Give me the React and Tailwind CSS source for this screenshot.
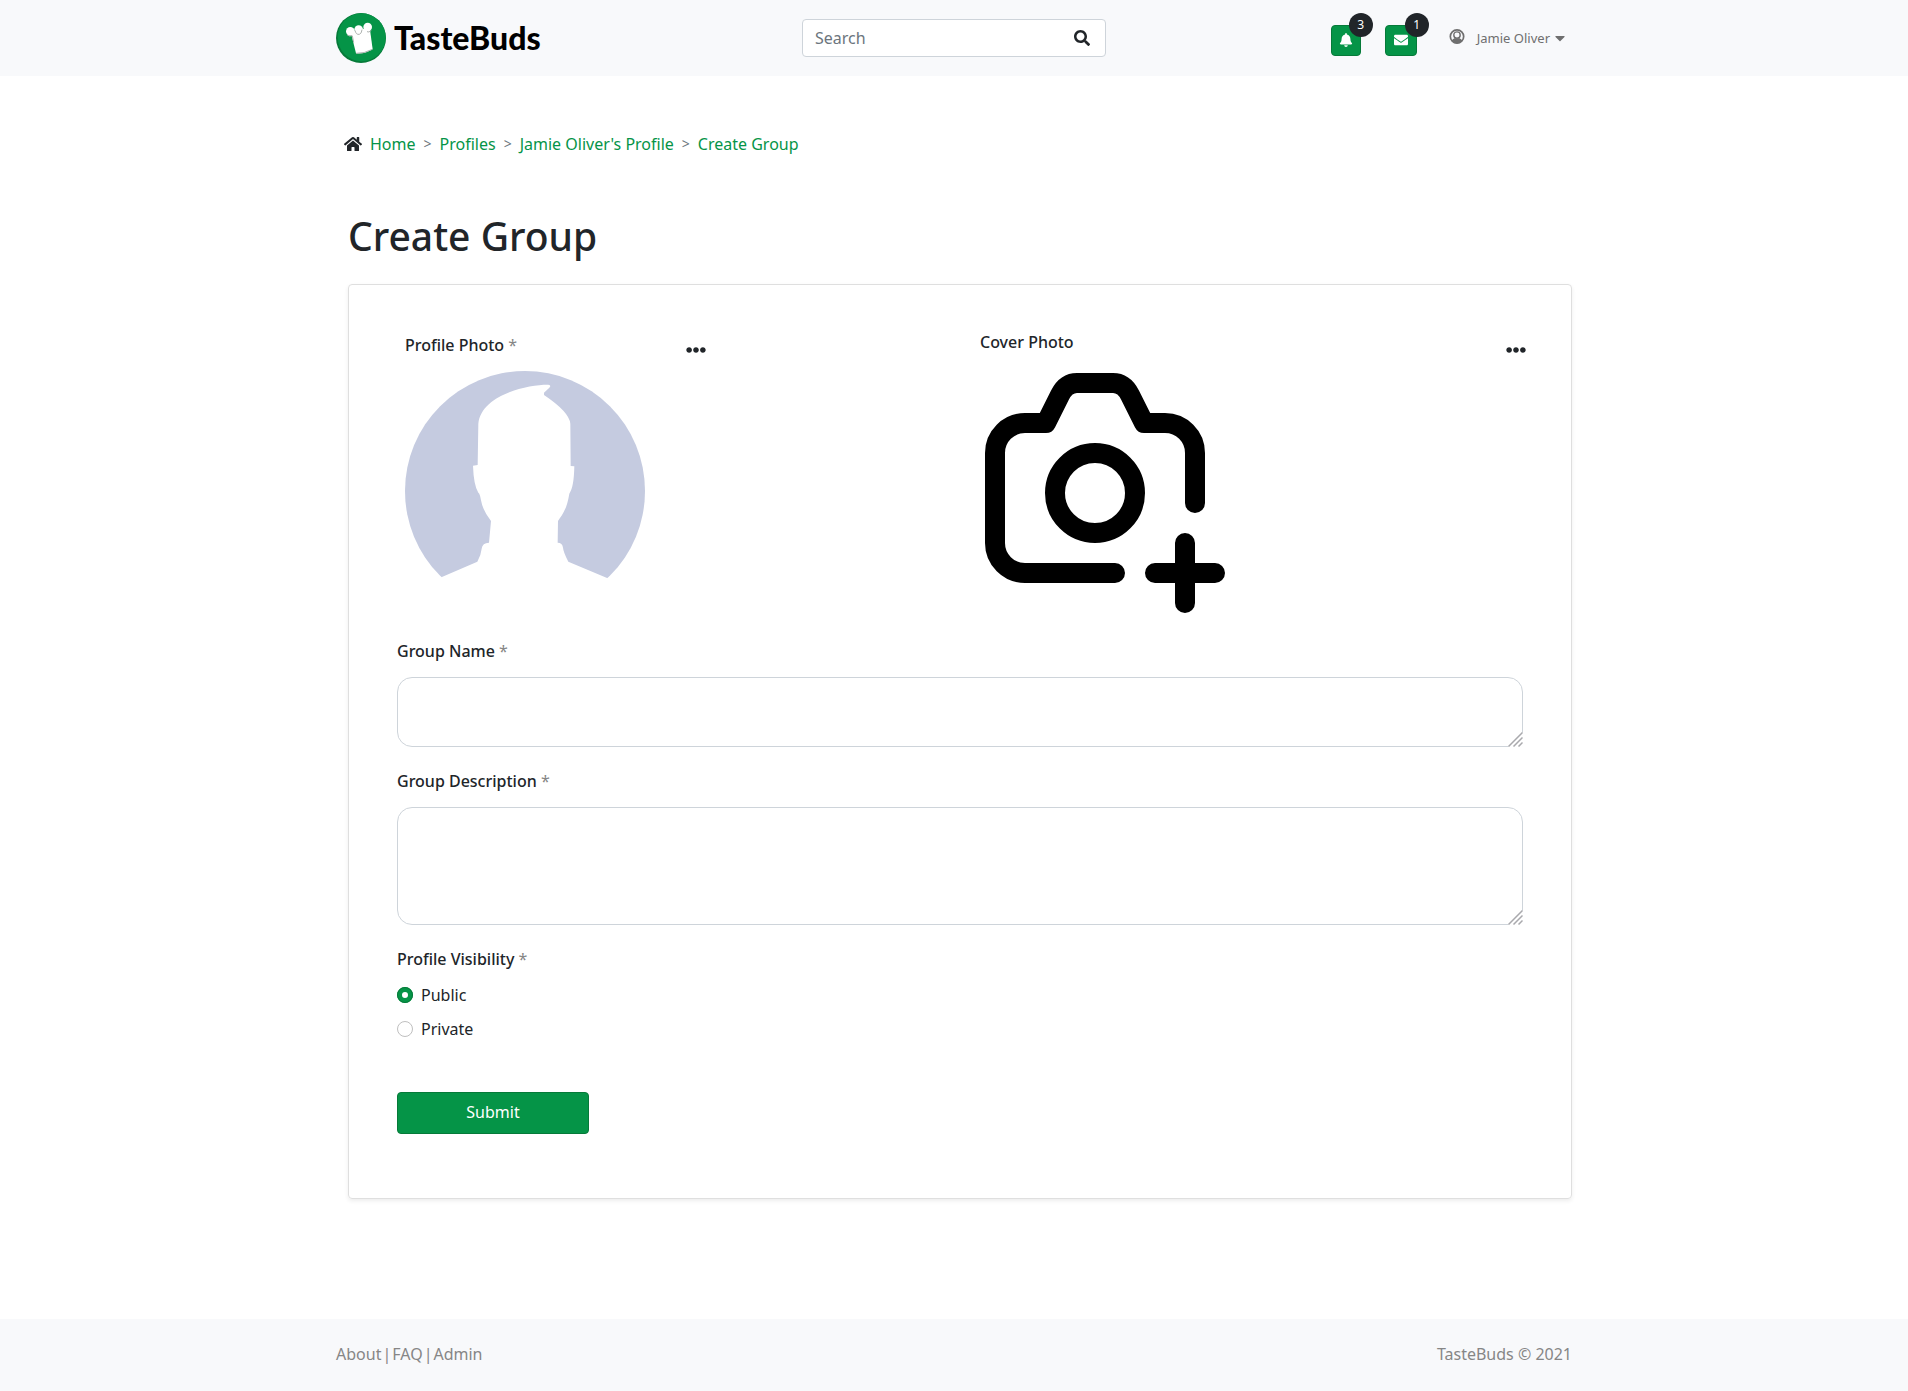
import React from "react";
import { FaSearch, FaBell, FaEnvelope, FaHome, FaCaretDown, FaEllipsisH } from "react-icons/fa";

const crumbs = ["Home", "Profiles", "Jamie Oliver's Profile", "Create Group"];

function Logo() {
  return (
    <a href="#" className="flex items-center gap-2 text-black">
      <svg viewBox="0 0 150 150" className="size-[50px]" aria-hidden="true">
        <circle cx="75" cy="75" r="75" fill="#067a39" />
        <circle cx="77" cy="73" r="72" fill="#059447" />
        <g fill="#fff">
          <circle cx="43" cy="55" r="13" />
          <circle cx="68" cy="50" r="13" />
          <circle cx="95" cy="42" r="13" />
          <path d="M45 60L60 121Q85 124 110 109L102 50L68 46Z" />
        </g>
        <path
          d="M33 65Q41 72 49 68M57 52Q60 66 70 64Q77 62 78 50M106 52Q98 60 93 56M49 69L53 88M60 121Q85 122 109 109"
          fill="none"
          stroke="#aeb3b0"
          strokeWidth="3"
        />
      </svg>
      <span className="font-['Lato',sans-serif] text-[32px] leading-9 font-black">TasteBuds</span>
    </a>
  );
}

function CountButton({ label, count, className, children }) {
  return (
    <button
      type="button"
      aria-label={label}
      className={"relative flex h-[31px] items-center justify-center rounded-sm border border-[#067a39] bg-[#059447] text-white " + className}
    >
      {children}
      <span className="absolute -top-[13px] -right-[13px] flex size-6 items-center justify-center rounded-full bg-[#212529] text-xs">
        {count}
      </span>
    </button>
  );
}

function Header() {
  return (
    <header className="bg-[#f8f9fb]">
      <div className="mx-auto grid h-[76px] max-w-[1260px] grid-cols-[1fr_auto_1fr] items-center px-3">
        <Logo />
        <form className="flex h-[38px] w-[304px] items-center rounded border border-[#ced4da] bg-white pr-[15px] pl-3">
          <input
            type="text"
            aria-label="Search"
            placeholder="Search"
            className="min-w-0 flex-1 bg-transparent outline-none placeholder:text-[#6c757d]"
          />
          <button type="button" aria-label="Run search">
            <FaSearch className="size-4" />
          </button>
        </form>
        <div className="flex items-center justify-end gap-6 pr-1">
          <div className="flex gap-6 pt-1">
            <CountButton label="Notifications" count="3" className="w-[30px]">
              <FaBell className="size-3.5" />
            </CountButton>
            <CountButton label="Messages" count="1" className="w-8">
              <FaEnvelope className="size-3.5" />
            </CountButton>
          </div>
          <button type="button" className="ml-2 flex items-center text-[13px] text-[#6f6f6f]">
            <svg viewBox="0 0 16 17" className="mr-3 h-[18px] w-4 pb-0.5" aria-hidden="true">
              <circle cx="8" cy="8" r="7.1" fill="none" stroke="currentColor" strokeWidth="1.8" />
              <circle cx="8" cy="6.5" r="3.4" fill="none" stroke="currentColor" strokeWidth="1.5" />
              <path d="M2 12.500Q4 10 5.800 9.500Q8 11 10.200 9.500Q12 10 14 12.500Q11 15.500 8 15.500Q5 15.500 2 12.500Z" fill="currentColor" />
            </svg>
            Jamie Oliver
            <FaCaretDown className="ml-0.5 size-4" />
          </button>
        </div>
      </div>
    </header>
  );
}

function Breadcrumbs() {
  return (
    <nav aria-label="Breadcrumb" className="flex items-center pl-2 leading-6">
      <FaHome className="mr-2 size-[18px]" />
      <ol className="flex gap-2">
        {crumbs.map((name, i) => (
          <li key={name} className="flex items-center gap-2">
            {i > 0 && <span className="text-sm text-[#6c757d]">&gt;</span>}
            <a href="#" className="text-[#059447]">{name}</a>
          </li>
        ))}
      </ol>
    </nav>
  );
}

function Star() {
  return <span className="font-normal text-[#868686]"> *</span>;
}

function Avatar() {
  return (
    <svg viewBox="75 182 720 720" className="size-60" role="img" aria-label="Default profile photo">
      <circle cx="435" cy="542" r="360" fill="#c5cbe0" />
      <path
        d="M184 801L292 754Q303 735 305 715Q307 697 327 697L333 632Q308 600 303 570Q300 550 295 547Q281 525 279 466L293 464L295 340C305 250 450 222 505 223Q515 225 508 232L492 247V254Q568 305 571 340L572 467L583 468C582 510 578 535 568 550C560 600 545 615 534 632L533 697Q547 697 549 712Q550 725 565 754L683 804V910H184Z"
        fill="#fff"
      />
    </svg>
  );
}

function CameraPlus() {
  return (
    <svg
      viewBox="0 0 240 240"
      className="size-60"
      fill="none"
      stroke="#000"
      strokeWidth="20"
      strokeLinecap="round"
      strokeLinejoin="round"
      role="img"
      aria-label="Add cover photo"
    >
      <path d="M130 200H40A30 30 0 0 1 10 170V80A30 30 0 0 1 40 50H61L75 22Q81 10 92 10H128Q139 10 145 22L159 50H180A30 30 0 0 1 210 80V130" />
      <circle cx="110" cy="120" r="40" />
      <path d="M170 200H230M200 170V230" />
    </svg>
  );
}

function PhotoPanel({ title, required, titleClass, children }) {
  return (
    <section>
      <div className="flex items-start justify-between">
        <h2 className={"font-medium " + titleClass}>
          {title}
          {required && <Star />}
        </h2>
        <button type="button" aria-label={title + " options"} className="pt-[7px] pb-px">
          <FaEllipsisH className="size-5" />
        </button>
      </div>
      {children}
    </section>
  );
}

function Field({ id, label, className }) {
  return (
    <div className="mb-[22px] flex flex-col gap-3.5">
      <label htmlFor={id} className="font-medium">
        {label}
        <Star />
      </label>
      <div className="relative flex">
        <textarea
          id={id}
          className={"w-full resize-none rounded-[15px] border border-[#ced4da] px-3 py-2 " + className}
        />
        <svg viewBox="0 0 15 15" className="pointer-events-none absolute right-0 bottom-0 size-[15px]" aria-hidden="true">
          <path d="M0 15L15 0V15Z" fill="#fff" />
          <path d="M0.500 14.500L14.500 0.500M5.500 14.500L14.500 5.500M10.500 14.500L14.500 10.500" stroke="#a9a9ad" strokeWidth="1.500" />
        </svg>
      </div>
    </div>
  );
}

function Choice({ id, label, checked }) {
  return (
    <div className="flex items-center gap-2">
      <input
        type="radio"
        name="visibility"
        id={id}
        defaultChecked={checked}
        className="size-4 appearance-none rounded-full border border-[#bfbfbf] bg-white checked:border-5 checked:border-[#059447] checked:outline checked:-outline-offset-1 checked:outline-[#067a39]"
      />
      <label htmlFor={id}>{label}</label>
    </div>
  );
}

export default function App() {
  return (
    <div className="flex min-h-screen flex-col bg-white font-['Noto_Sans',sans-serif] text-base leading-6 text-[#212529]">
      <Header />
      <main className="mx-auto w-full max-w-[1260px] flex-1 px-3 pt-14">
        <Breadcrumbs />
        <div className="pl-3">
          <h1 className="pt-14 text-[39px] leading-12 font-medium">Create Group</h1>
          <form className="mt-6 rounded border border-[#dfdfdf] px-12 pt-12 pb-16 shadow-[0_2px_4px_rgba(0,0,0,0.075)]">
            <div className="flex justify-between pb-[26px]">
              <div className="w-[309px] pl-2">
                <PhotoPanel title="Profile Photo" titleClass="leading-6" required>
                  <div className="pt-2.5">
                    <Avatar />
                  </div>
                </PhotoPanel>
              </div>
              <div className="-mr-[3px] w-[546px]">
                <PhotoPanel title="Cover Photo" titleClass="leading-[18px]">
                  <div className="pt-3 pl-[5px]">
                    <CameraPlus />
                  </div>
                </PhotoPanel>
              </div>
            </div>
            <Field id="name" label="Group Name" className="h-[70px]" />
            <Field id="description" label="Group Description" className="h-[118px]" />
            <fieldset className="flex flex-col gap-2.5">
              <legend className="mb-3 font-medium">
                Profile Visibility
                <Star />
              </legend>
              <Choice id="public" label="Public" checked />
              <Choice id="private" label="Private" />
            </fieldset>
            <button
              type="submit"
              className="mt-[51px] h-[42px] w-48 rounded-sm border border-[#067a39] bg-[#059447] pb-0.5 text-white"
            >
              Submit
            </button>
          </form>
        </div>
      </main>
      <footer className="mt-[120px] bg-[#f8f9fb] text-[#868686]">
        <div className="mx-auto flex h-[72px] max-w-[1260px] items-center justify-between px-3 pb-0.5">
          <nav aria-label="Footer" className="flex gap-px">
            <a href="#">About</a>
            <span>|</span>
            <a href="#">FAQ</a>
            <span>|</span>
            <a href="#">Admin</a>
          </nav>
          <p>TasteBuds © 2021</p>
        </div>
      </footer>
    </div>
  );
}
